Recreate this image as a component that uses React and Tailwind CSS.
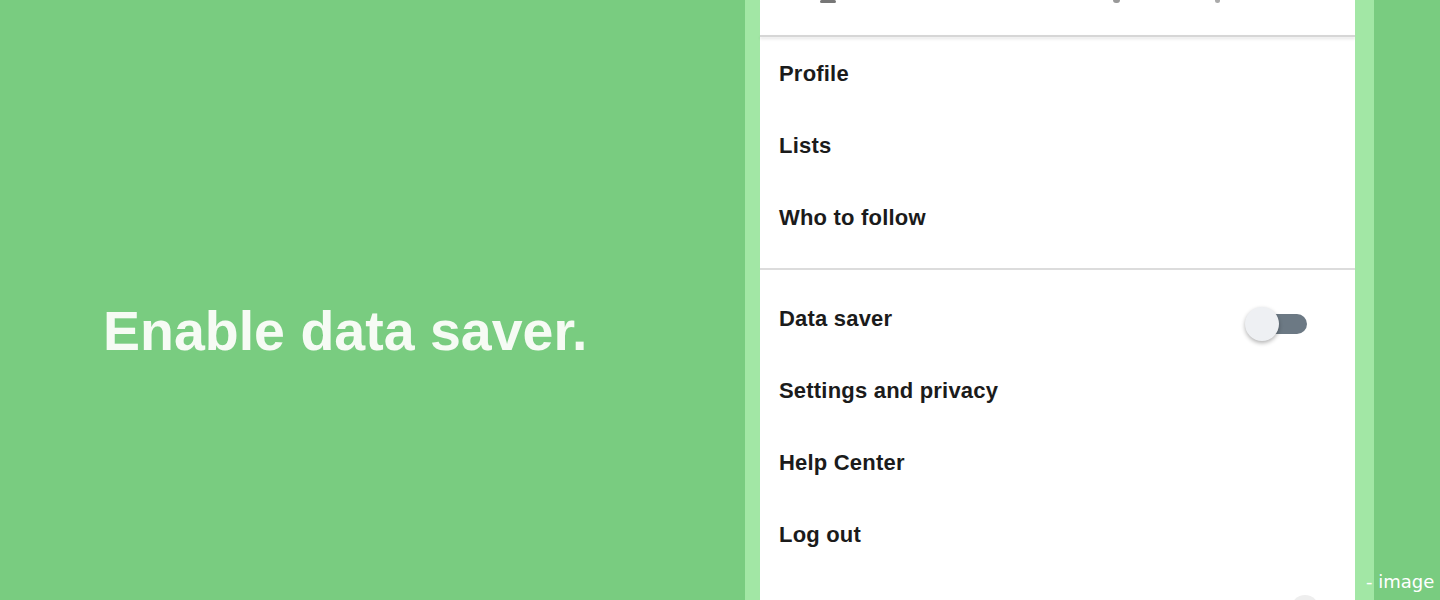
import React from "react";

function Row({ label, children }) {
  return (
    <div className="h-[72px] shrink-0 flex items-center justify-between pl-[19px] pr-[48px]">
      <span className="text-[22px] font-bold text-[#1b1b1b] tracking-[0.2px]">{label}</span>
      {children}
    </div>
  );
}

function Toggle() {
  return (
    <div className="relative w-[62px] h-[34px] mt-[12px]">
      <div className="absolute left-[8px] right-0 top-[7px] h-[20px] rounded-full bg-[#6c7984]" />
      <div className="absolute left-0 top-0 w-[34px] h-[34px] rounded-full bg-[#eef0f3] shadow-[0_2px_4px_rgba(0,0,0,0.3)]" />
    </div>
  );
}

export default function App() {
  return (
    <div className="relative w-[1440px] h-[600px] overflow-hidden flex bg-[#79cc80] font-['Liberation_Sans',Arial,sans-serif]">
      <div className="w-[745px] shrink-0 flex items-center pl-[103px] pt-[64px]">
        <h1 className="text-[55.5px] font-bold text-[#f6fbf4] leading-none">Enable data saver.</h1>
      </div>
      <div className="w-[15px] shrink-0 bg-[#a2e7a5]" />
      <div className="w-[595px] shrink-0 bg-white flex flex-col">
        <div className="h-[35px] shrink-0 flex items-start">
          <div className="ml-[60px] w-[16px] h-[3px] bg-[#777] rounded-sm" />
          <div className="ml-[277px] w-[7px] h-[3px] bg-[#999] rounded-b-full" />
          <div className="ml-[95px] w-[5px] h-[3px] bg-[#aaa] rounded-b-full" />
        </div>
        <div className="h-[2px] shrink-0 bg-[#d6d6d6] shadow-[0_2px_3px_rgba(0,0,0,0.12)]" />
        <Row label="Profile" />
        <Row label="Lists" />
        <Row label="Who to follow" />
        <div className="h-[15px] shrink-0" />
        <div className="h-[2px] shrink-0 bg-[#dcdcdc]" />
        <div className="h-[12px] shrink-0" />
        <Row label="Data saver">
          <Toggle />
        </Row>
        <Row label="Settings and privacy" />
        <Row label="Help Center" />
        <Row label="Log out" />
        <div className="h-[72px] shrink-0 flex justify-end pt-[25px] pr-[36px]">
          <div className="w-[28px] h-[28px] rounded-full bg-[#eeeeee]" />
        </div>
      </div>
      <div className="w-[19px] shrink-0 bg-[#a2e7a5]" />
      <div className="flex-1" />
      <span className="absolute left-[1366px] top-[568px] text-[18px] text-white font-['DejaVu_Sans',sans-serif]">- image</span>
    </div>
  );
}
